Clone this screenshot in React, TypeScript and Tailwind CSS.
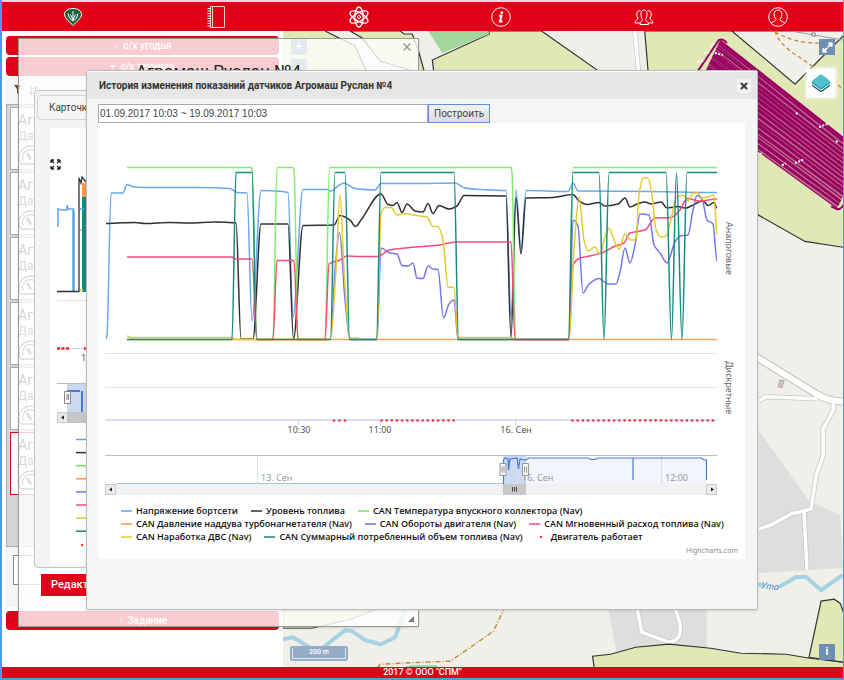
import { ReactNode } from "react";
import { ArrowDownUp, Maximize2, X } from "lucide-react";

type Point = [number, number];

// Monotone cubic interpolation, keeps plateaus flat and peaks where they are
function spline(points: Point[]) {
  const slopes = points.slice(1).map((p, i) => (p[1] - points[i][1]) / (p[0] - points[i][0]));
  const tangents = points.map((_, i) => {
    const a = slopes[i - 1];
    const b = slopes[i];
    if (a === undefined || b === undefined || a * b <= 0) return 0;
    return (2 * a * b) / (a + b);
  });
  let d = `M${points[0][0]} ${points[0][1]}`;
  for (let i = 1; i < points.length; i++) {
    const [x0, y0] = points[i - 1];
    const [x1, y1] = points[i];
    const h = (x1 - x0) / 3;
    d += `C${x0 + h} ${y0 + h * tangents[i - 1]} ${x1 - h} ${y1 - h * tangents[i]} ${x1} ${y1}`;
  }
  return d;
}

const SERIES: { color: string; points: Point[] }[] = [
  {
    color: "#6aa9ee",
    points: [[106, 339], [107, 335], [111, 193], [123, 193], [127, 184.5], [134, 187], [150, 187.5], [200, 187.5], [230, 188.5], [237, 192.5], [247, 193], [252, 321], [261, 190.5], [275, 191], [288, 192.5], [293, 317], [303, 189.5], [327, 189.5], [331, 191], [338, 186], [344, 183], [355, 188.5], [375, 190], [381, 183.5], [420, 183.5], [455, 183], [465, 188], [480, 189.5], [506, 190.5], [511, 318], [516, 190], [521, 250], [526, 190.5], [568, 191.5], [573, 183], [578, 191], [650, 191.5], [717, 192.5]],
  },
  {
    color: "#303036",
    points: [[106, 223.5], [118, 223], [135, 222.5], [145, 223.5], [170, 222.5], [190, 223], [215, 222], [236, 223], [241, 339], [253, 339], [261, 224], [288, 224], [293.5, 339], [303, 225.5], [334, 225], [340, 215.5], [350, 220], [355.5, 226.5], [361, 220], [381, 194], [388, 204.5], [393, 205.5], [397, 202.5], [402, 212.5], [407, 204], [415, 211], [423, 212], [428, 203.5], [433, 213.5], [439, 205.5], [449, 209], [457, 206], [464, 195.5], [506, 196], [511, 338], [516, 197.5], [521, 254], [526, 198], [553, 197.5], [573, 194.5], [579, 201], [587, 204.5], [599, 202.5], [605, 206], [618, 204], [625, 198], [630, 207], [637, 204], [645, 202], [651, 204], [661, 202], [667, 208], [678, 206.5], [685, 208], [703, 201], [708, 205.5], [714, 202.5], [717, 208]],
  },
  {
    color: "#82ee6c",
    points: [[127, 167.5], [251, 167.5], [252, 169], [257, 339.5], [273, 339.5], [277, 167.5], [293, 167.5], [294, 170], [298, 339.5], [325, 339.5], [329.5, 167.5], [511, 167.5], [512, 172], [515.5, 339.5], [568.5, 339.5], [573, 167.5], [717, 167.5]],
  },
  { color: "#f7a35c", points: [[127, 339.5], [717, 339.5]] },
  {
    color: "#7578ee",
    points: [[330.5, 339.5], [335, 270], [339.5, 232.5], [345, 300], [350, 339.5], [377, 339.5], [381, 248], [390, 253], [397, 254], [402, 265.5], [408, 266], [413, 263], [417, 278], [423, 278.5], [428, 266], [433, 269], [438, 269.5], [443.5, 318], [449, 304], [454, 300], [458, 339.5], [569, 339.5], [573, 220], [578, 226], [583, 293], [589, 284], [599, 278.5], [608, 284], [616, 284], [620, 272], [625, 248], [630, 263], [635, 245], [640, 214], [649, 215], [654, 245], [660, 253], [667, 263], [675, 242], [680, 236], [688, 235], [693, 210], [697, 195.5], [702, 199], [707, 220], [713, 224], [717, 261]],
  },
  {
    color: "#f04f78",
    points: [[127, 257], [232, 257], [235, 259], [252, 259], [257, 339.5], [273, 339.5], [277, 260.5], [294, 260.5], [298, 339.5], [325, 339.5], [329, 264], [340, 260], [347, 256], [360, 256.5], [378, 256.5], [389, 250], [410, 247.5], [440, 245], [455, 242], [511, 242], [515, 339.5], [569, 339.5], [573, 265], [580, 258], [590, 256], [604, 252], [613, 247], [624, 243], [630, 233], [645, 230], [655, 218], [671, 217.5], [680, 210], [687, 198.5], [700, 201], [717, 199]],
  },
  {
    color: "#e4cb30",
    points: [[127, 336], [131, 337.5], [232, 337.5], [236, 339.5], [330.5, 339.5], [336, 270], [340, 194.5], [344, 270], [350, 338], [357, 338], [361, 339.5], [377, 339.5], [381, 213], [385, 207.5], [391, 207.5], [397, 215], [405, 213.5], [413, 215], [427, 217], [433, 226.5], [438, 226.5], [443, 240], [448, 287], [454, 287.5], [458, 337.5], [510, 337.5], [517, 339.5], [569, 339.5], [574, 250], [579, 197], [584, 240], [588, 251], [595, 247], [600, 254], [605, 237], [609, 228], [614, 240], [619, 249], [625, 234], [631, 240], [636, 240], [639, 195], [643, 178], [648, 178], [652, 195], [656, 230], [661, 237], [666, 236], [672, 215], [676, 198], [683, 195], [688, 201], [693, 193], [698, 193], [702, 198], [708, 197], [714, 195], [717, 235]],
  },
  {
    color: "#188a82",
    points: [[127, 339.5], [232, 339.5], [236, 172.5], [252, 172.5], [256.5, 339.5], [330.5, 339.5], [335, 172.5], [345, 172.5], [349.5, 339.5], [376.5, 339.5], [381, 172.5], [454, 172.5], [458.5, 339.5], [568.5, 339.5], [573, 172.5], [599, 172.5], [604, 339.5], [609, 172.5], [666, 172.5], [671.5, 339.5], [676.5, 173], [682, 339.5], [687, 172.5], [717, 172.5]],
  },
];

const LEGEND = [
  { label: "Напряжение бортсети", color: "#5b9fe8" },
  { label: "Уровень топлива", color: "#303036" },
  { label: "CAN Температура впускного коллектора (Nav)", color: "#78e660" },
  { label: "CAN Давление наддува турбонагнетателя (Nav)", color: "#fb9440" },
  { label: "CAN Обороты двигателя (Nav)", color: "#6e72ee" },
  { label: "CAN Мгновенный расход топлива (Nav)", color: "#f04f78" },
  { label: "CAN Наработка ДВС (Nav)", color: "#e4cb30" },
  { label: "CAN Суммарный потребленный объем топлива (Nav)", color: "#188080" },
  { label: "Двигатель работает", color: "#f33", dot: true },
];

const ENGINE_DOTS = [
  334, 339.5, 345,
  ...Array.from({ length: 15 }, (_, i) => 381.5 + i * 5.15),
  ...Array.from({ length: 28 }, (_, i) => 572.5 + i * 5.2),
];

function NavLink({ label, children }: { label: string; children: ReactNode }) {
  return (
    <a href="#" aria-label={label} className="flex items-center justify-center">
      <svg width="24" height="24" viewBox="0 0 24 24" fill="none" stroke="#fff" strokeWidth="1">
        {children}
      </svg>
    </a>
  );
}

function Header() {
  return (
    <header className="border-t-2 border-[#dcdcdc] bg-[#e20018]">
      <nav className="grid h-[29px] grid-cols-[17fr_17fr_17fr_17fr_17fr_15fr] pr-0.5">
        <NavLink label="Карта">
          <path d="M12 20.500C10 18 3.500 13.500 3.500 9.500C3.500 5.500 7.500 3.500 12 3.500S20.500 5.500 20.500 9.500C20.500 13.500 14 18 12 20.500Z" fill="#17623a" />
          <path d="M12 6V15M9.500 9.500L12 15L14.500 9.500M7 8.500Q7.500 14 12 16Q16.500 14 17 8.500" />
        </NavLink>
        <NavLink label="Журнал">
          <path d="M6.500 1.500H20.500V22.500H6.500ZM8.500 1.500V22.500" strokeWidth="0.800" />
          <path d="M3.500 3.500H6M3.500 6H6M3.500 8.500H6M3.500 11H6M3.500 13.500H6M3.500 16H6M3.500 18.500H6M3.500 21H6" />
        </NavLink>
        <NavLink label="Анализ">
          <ellipse cx="12" cy="12" rx="4.200" ry="10" strokeWidth="1.300" />
          <ellipse cx="12" cy="12" rx="4.200" ry="10" strokeWidth="1.300" transform="rotate(60 12 12)" />
          <ellipse cx="12" cy="12" rx="4.200" ry="10" strokeWidth="1.300" transform="rotate(120 12 12)" />
          <circle cx="12" cy="12" r="1.500" />
        </NavLink>
        <NavLink label="Информация">
          <circle cx="12" cy="12" r="9.300" />
          <circle cx="12.800" cy="7.700" r="1.400" fill="#fff" stroke="none" />
          <path d="M10 10.700H12.500L11 16.500H13.500" strokeWidth="2" />
        </NavLink>
        <NavLink label="Пользователи">
          <path d="M8 19.500C8 16 10.500 16.500 10.500 14.500C8.500 12 8 5 12 5S15.500 12 13.500 14.500C13.500 16.500 16.500 16 16.500 19.500Z" />
          <path d="M8.500 6C4.500 4.500 3.800 10 6 13C6 15 3 15 3 18H8M15.500 6C19.500 4.500 20.200 10 18 13C18 15 21 15 21 18H16.500" />
        </NavLink>
        <NavLink label="Профиль">
          <circle cx="12" cy="12" r="9.300" />
          <path d="M5.500 18.500C6 16 10.200 16.500 10.200 14.500C7 11 7.500 5 12 5S17 11 13.800 14.500C13.800 16.500 18 16 18.500 18.500" />
        </NavLink>
      </nav>
    </header>
  );
}

function SideButton({ children }: { children: ReactNode }) {
  return (
    <button className="flex h-[19px] w-full items-center justify-center gap-1 rounded-sm bg-[#e20018] text-[10px] font-medium text-white">
      {children}
    </button>
  );
}

function Caret({ open }: { open?: boolean }) {
  return (
    <svg width="6" height="6" viewBox="0 0 6 6">
      <path d={open ? "M0 1H6L3 5Z" : "M2 1L4 3L2 5Z"} fill={open ? "#fff" : "#6cc"} />
    </svg>
  );
}

function MachineCard({ selected }: { selected?: boolean }) {
  return (
    <li className={`h-[63px] border bg-white pl-[7px] text-[#222] ${selected ? "border-[#e20018]" : "border-[#aaa]"}`}>
      <p className="pt-1 text-sm leading-4">Агромаш</p>
      <p className="text-xs leading-4 text-[#444]">Дата</p>
      <svg width="25" height="21" viewBox="0 0 25 21" fill="none" stroke="#555" strokeWidth="1.300">
        <path d="M3 20A11.500 11.500 0 1 1 22 20ZM5 16.500A8 8 0 1 1 20 16.500" />
        <path d="M9 9L13 15.500" strokeWidth="2.500" />
      </svg>
    </li>
  );
}

function Sidebar() {
  return (
    <aside className="flex w-[33.4%] flex-col bg-white px-1 pt-[5px]">
      <div className="flex flex-col gap-0.5">
        <SideButton>
          <Caret />
          с/х угодья
        </SideButton>
        <SideButton>
          <Caret open />
          с/х техника
        </SideButton>
      </div>
      <div className="flex h-7 items-center gap-1.5 bg-[#f5f5f5] pl-2 text-[#333]">
        <svg width="8" height="10" viewBox="0 0 8 10">
          <path d="M0 0H8L5 4V10L3 8V4Z" fill="#6b4a20" />
        </svg>
        <ArrowDownUp size={11} />
      </div>
      <ul className="flex h-[443px] flex-col gap-0.5 border border-[#aaa] bg-[#d6d6d6] py-0.5 pl-[3px]">
        <MachineCard />
        <MachineCard />
        <MachineCard />
        <MachineCard />
        <MachineCard />
        <MachineCard selected />
      </ul>
      <div className="mb-1 bg-[#f5f5f5] px-[7px] pt-2 pb-[22px]">
        <input aria-label="Поиск" className="block h-[30px] w-full border border-[#888] bg-white px-2" />
      </div>
      <SideButton>
        <Caret />
        Задание
      </SideButton>
    </aside>
  );
}

const TRACK_WIDTHS = [2.8, 2.4, 1.6, 2.6, 1.2, 2.4, 3, 1.6, 2.4, 2.8, 1.4];

function TrackLines() {
  return (
    <g stroke="#990062" fill="none">
      <path d="M719 41L862 154L836 208L690 102Z" fill="#990062" fillOpacity="0.500" stroke="none" />
      {Array.from({ length: 27 }, (_, i) => {
        const t = i / 26;
        const s = Math.min(1, Math.max(0, t + ((i * 7) % 5) * 0.014 - 0.028));
        return (
          <path
            key={i}
            d={`M${719 - 29 * t} ${41 + 61 * t}L${862 - 26 * s} ${154 + 54 * s}`}
            strokeWidth={TRACK_WIDTHS[i % TRACK_WIDTHS.length]}
          />
        );
      })}
      <path d="M697 71L718 40Q722 38 726 43M830 206L836 209Q841 209 843 203" strokeWidth="2" />
      <path
        d="M709 47L713 44M703 53L709 52M714 53L722 55M697 62L704 60M795 114L797 112M818 127L828 123M835 142L837 140M759 154L762 152M781 165L785 163M794 163L803 159"
        stroke="#fff"
        strokeWidth="2"
        strokeDasharray="2 1.500"
      />
    </g>
  );
}

function MapView() {
  return (
    <div className="relative flex-1 overflow-hidden bg-[#f1efea]">
      <svg className="absolute inset-0 h-full w-full" viewBox="283 31 559 636" preserveAspectRatio="xMinYMin slice" fill="none">
        <g fill="#e0e9b6" stroke="#333" strokeWidth="1.200">
          <path d="M283 31H325L355 46L370 80H283Z" stroke="none" />
          <path d="M350 31L362 38L380 61L425 75L418 50L412 34H404L400 31Z" />
          <path d="M325 31L355 46L370 80" fill="none" />
          <path d="M488 31L489 34L432 60L436 90H625L541 31Z" />
          <path d="M428 31H488L489 34L442 53Z" fill="#a3d69d" stroke="none" />
          <path d="M644 31L654 150L758 215L804 241L843 247V31Z" />
          <path d="M731 31L794 84L843 35V31Z" fill="#f1efea" />
        </g>
        <path d="M634 31L638 72" stroke="#ccc" strokeWidth="5" />
        <path d="M634 31L638 72" stroke="#fff" strokeWidth="3.500" />
        <TrackLines />
        <path d="M774 31Q778 43 792 53Q812 66 842 89M774 32Q795 44 819 43" stroke="#b98b35" strokeWidth="1.300" strokeDasharray="4 3" />
        <path d="M790 31L842 40" stroke="#999" />
        <rect x="811" y="33" width="3" height="3" fill="#fff" stroke="#777" />

        <path d="M758 430L808 500L839 514L842 567L758 572Z" fill="#e0dddf" />
        <path d="M607 605H706V652L616 651Z" fill="#e0dddf" />
        <path d="M779 379L783 380L781 387L777 386Z" fill="#cfc5be" stroke="#b5aaa4" />
        <g strokeLinejoin="round">
          <path d="M758 400L765 396L816 398M832 402V410L822 428V455L815 475L810 508L790 513L770 524L758 528M803 511L806 569M636 605L641 631L668 641Q682 640 679 622L674 605" stroke="#c9c6c3" strokeWidth="5" />
          <path d="M750 353L815 393Q825 400 843 401" stroke="#c4c1be" strokeWidth="8" />
          <path d="M758 400L765 396L816 398M832 402V410L822 428V455L815 475L810 508L790 513L770 524L758 528M803 511L806 569M636 605L641 631L668 641Q682 640 679 622L674 605" stroke="#fff" strokeWidth="3.500" />
          <path d="M750 353L815 393Q825 400 843 401" stroke="#fff" strokeWidth="6" />
        </g>
        <g stroke="#a5d3e1" strokeWidth="4" strokeLinejoin="round">
          <path d="M283 638L293 636L317 651L345 629L352 630L365 639L381 643L395 636L405 608" />
          <path d="M755 583L762 584M778 586L795 576H805L820 589L840 575H843" />
        </g>
        <text x="760" y="587" fill="#3e86c4" fontSize="9" fontStyle="italic" fontFamily="Noto Sans, sans-serif" transform="rotate(8 760 587)">
          Ута
        </text>
        <path d="M283 605H385L350 618L312 627H283Z" fill="#e0e9b6" stroke="#555" />
        <path d="M505 605L493 630L450 660L422 661L380 663L372 672" stroke="#b98b35" strokeWidth="1.400" strokeDasharray="5 2 1 2" />
        <path d="M398 667L412 664H437V667Z" fill="#93cfa0" />
        <g fill="#e0e9b6" stroke="#333" strokeWidth="1.200">
          <path d="M594 670L592 655L610 653L635 646L668 643L710 647L740 652L785 653L809 657L843 661V670Z" />
          <path d="M808 656L820 600L833 598L839 602L843 613V661Z" />
        </g>
      </svg>

      <div className="absolute top-2 left-2 flex flex-col gap-1">
        <button className="h-4 w-4 bg-[#7b98bc] text-xs leading-4 font-bold text-white">+</button>
        <button className="h-4 w-4 bg-[#7b98bc] text-xs leading-4 font-bold text-white">−</button>
      </div>
      <button aria-label="На весь экран" className="absolute top-2 right-2 flex h-4 w-4 items-center justify-center bg-[#6f8fb2] text-white">
        <Maximize2 size={11} strokeWidth={4} />
      </button>
      <button aria-label="Слои" className="absolute top-[38px] right-2 flex h-7 w-7 items-center justify-center bg-white shadow-[0_0_2px_2px_rgba(255,255,255,0.6)]">
        <svg width="20" height="20" viewBox="0 0 20 20">
          <path d="M1 10V12Q1 13 2 13.700L9 18.700Q10 19.300 11 18.700L18 13.700Q19 13 19 12V10Z" fill="#1f4f5c" />
          <path d="M1 9V10.500Q1 11.500 2 12.200L9 17.200Q10 17.800 11 17.200L18 12.200Q19 11.500 19 10.500V9Z" fill="#fff" />
          <path d="M1 8V9.500Q1 10.500 2 11.200L9 16.200Q10 16.800 11 16.200L18 11.200Q19 10.500 19 9.500V8Z" fill="#2a9fab" />
          <path d="M2 7L9 1.700Q10 1 11 1.700L18 7Q19.500 8.200 18 9.400L11 14.500Q10 15.200 9 14.500L2 9.400Q0.500 8.200 2 7Z" fill="#51c1cf" />
        </svg>
      </button>
      <button className="absolute right-2 bottom-[7px] h-4 w-4 bg-[#6f8fb2] text-[11px] leading-4 font-bold text-white">i</button>
      <div className="absolute bottom-1.5 left-[7px] h-[15px] w-[58px] rounded-xs bg-[#96abc6] p-0.5">
        <div className="h-[11px] border border-t-0 border-white/70 text-center text-[7px] leading-[9px] font-medium text-white">200 m</div>
      </div>
    </div>
  );
}

function CardWindow() {
  return (
    <section className="absolute top-[38px] left-4 w-[401px] border border-[#999] bg-white/80 shadow-sm">
      <button aria-label="Закрыть карточку" className="absolute top-0.5 right-[5px] text-[#999]">
        <X size={12} strokeWidth={3} />
      </button>
      <h2 className="h-[51px] pt-5 text-center text-[17px] leading-6 text-[#222]">Агромаш Руслан №4</h2>
      <div className="mx-[15px] h-[478px] rounded-sm border border-[#c4c4c4] bg-[#f4f4f4] pt-1 pl-0.5">
        <button className="block h-[25px] rounded-sm border border-[#d4d4d4] bg-[#f5f5f5] px-[11px] text-[10px] text-[#444]">Карточка</button>
        <div className="mt-2 ml-[13px] h-[437px] bg-white">
          <MiniChart />
        </div>
      </div>
      <div className="flex items-start pt-1.5 pb-[30px] pl-[22px]">
        <button className="h-[22px] bg-[#e20018] px-2.5 text-[11px] font-medium text-white">Редактировать</button>
      </div>
      <svg className="absolute right-1 bottom-1" width="6" height="6" viewBox="0 0 6 6">
        <path d="M6 0V6H0Z" fill="#777" />
      </svg>
    </section>
  );
}

function MiniChart() {
  return (
    <svg className="block" width="60" height="437" viewBox="50 128 60 437" fill="none">
      <path d="M51 160V163M51 160H54M51 160L54 163M60 160V163M60 160H57M60 160L57 163M51 169V166M51 169H54M51 169L54 166M60 169V166M60 169H57M60 169L57 166" stroke="#222" strokeWidth="1.300" />
      <path d="M82 183H110V292H82Z" fill="#178a82" />
      <path d="M82 183H110V197H82Z" fill="#fd9a4a" />
      <path d="M58 227V209L62 210H67V205L68 209H72M73 208V291M74 210V291M80 209H84" stroke="#5da2ee" strokeWidth="1.500" />
      <path d="M57 291.500H79V178L81 183L82 177L86 182" stroke="#333" strokeWidth="1.300" />
      <path d="M79 230H82" stroke="#f15c80" />
      <path d="M80 290H83" stroke="#e4d354" strokeWidth="2" />
      <path d="M57 300.500H110" stroke="#e2e2e2" />
      <path d="M57 348.500H110" stroke="#ccd6eb" />
      <path d="M57 348.500H69M84 348.500H110" stroke="#f22" strokeWidth="2.500" strokeDasharray="3 1.500" />
      <text x="81" y="361" fill="#555" fontSize="9" fontFamily="Noto Sans, sans-serif">10</text>
      <path d="M57 383.500H110" stroke="#bbb" />
      <path d="M67 384H110V412H67Z" fill="#ccd8ef" />
      <path d="M67 391H80M82 391V412" stroke="#4a78cc" strokeWidth="2" />
      <path d="M64.500 391.500H70.500V403.500H64.500Z" fill="#f7f7f7" stroke="#888" />
      <path d="M67 394V400M68.500 394V400" stroke="#888" />
      <path d="M57.500 412.500H67.500V422.500H57.500Z" fill="#ebe7e8" stroke="#ccc" />
      <path d="M67 412H110V423H67Z" fill="#c5c5c5" />
      <path d="M64 415.500V419.500L61 417.500Z" fill="#222" />
      {LEGEND.map(({ label, color, dot }, i) =>
        dot ? (
          <circle key={label} cx="82" cy="545" r="1.200" fill={color} />
        ) : (
          <path key={label} d={`M76 ${439.5 + i * 13.1}H88`} stroke={color} strokeWidth="1.500" />
        ),
      )}
    </svg>
  );
}

function SensorChart() {
  return (
    <svg className="block w-full" viewBox="98 123 647 374" fill="none" fontFamily="Lucida Grande, Noto Sans, sans-serif" fontSize="9">
      {SERIES.map(({ color, points }) => (
        <path key={color} d={spline(points)} stroke={color} strokeWidth="1.500" strokeLinejoin="round" />
      ))}
      <path d="M105 353.500H717M105 387.500H717" stroke="#e3e3e3" />
      <path d="M105 420H717" stroke="#ccd6eb" strokeWidth="1.500" />
      <path d="M298.500 420V425M380.500 420V425M515.500 420V425" stroke="#ccd6eb" />
      {ENGINE_DOTS.map((x) => (
        <circle key={x} cx={x} cy="420.500" r="1.200" fill="#f22f2f" />
      ))}
      <g fill="#555" textAnchor="middle">
        <text x="299" y="433">10:30</text>
        <text x="380" y="433">11:00</text>
        <text x="516" y="433">16. Сен</text>
      </g>
      <g fill="#666">
        <text transform="translate(726 222) rotate(90)">Аналоговые</text>
        <text transform="translate(726 361) rotate(90)">Дискретные</text>
      </g>

      {/* navigator */}
      <path d="M503 456H526V484H503Z" fill="#ccd9f0" />
      <path d="M526 458H707V484H526Z" fill="#f2f6fc" />
      <path d="M105 455.500H717" stroke="#c0c0c0" />
      <path d="M257.500 456V484M518.500 456V484M661.500 456V484" stroke="#d9dfe8" />
      <path d="M116 483.500H503" stroke="#a9c1e8" />
      <path
        d="M503.500 484V460L505 458L508 459L508.500 470L510 459L517 458L518.500 469L520 459L525 460L529 458H588L591 459.500H595L598 458H633V480V458H701L704 460H706.500V480"
        stroke="#4a7bd0"
        strokeWidth="1.200"
      />
      <g fill="#999">
        <text x="261" y="481">13. Сен</text>
        <text x="522" y="481">16. Сен</text>
        <text x="665" y="481">12:00</text>
      </g>
      {[503, 525.5].map((x) => (
        <g key={x} stroke="#999">
          <path d={`M${x - 3} 463.500H${x + 3}V475.500H${x - 3}Z`} fill="#f5f5f5" />
          <path d={`M${x - 1} 466.500V472.500M${x + 1} 466.500V472.500`} />
        </g>
      ))}
      <path d="M105 484H717V495H105Z" fill="#f1f1f1" />
      <path d="M105.500 484.500H115.500V494.500H105.500ZM706.500 484.500H716.500V494.500H706.500Z" fill="#ebebeb" stroke="#ccc" />
      <path d="M112 487.500V491.500L109 489.500ZM711 487.500V491.500L714 489.500Z" fill="#222" />
      <path d="M503 484H526V495H503Z" fill="#c8c8c8" />
      <path d="M512.500 487V491.500M514.500 487V491.500M516.500 487V491.500" stroke="#444" />
    </svg>
  );
}

function HistoryDialog() {
  return (
    <section
      role="dialog"
      aria-labelledby="history-title"
      className="absolute top-[70px] right-[85px] left-[84px] rounded-xs border border-[#bbb] bg-[#f5f5f5] shadow-sm"
    >
      <div className="flex h-7 items-center justify-between border-t border-white bg-[#e6e6e6] pr-1.5 pl-3">
        <h1 id="history-title" className="text-[10px] font-bold text-[#333]">
          История изменения показаний датчиков Агромаш Руслан №4
        </h1>
        <button aria-label="Закрыть" className="flex h-3.5 w-3.5 items-center justify-center rounded-xs bg-[#f4f4f4] text-[#444]">
          <X size={10} strokeWidth={5} />
        </button>
      </div>
      <div className="pt-[5px] pr-3 pb-[50px] pl-[11px]">
        <form className="flex">
          <input
            aria-label="Период"
            defaultValue="01.09.2017 10:03 ~ 19.09.2017 10:03"
            className="h-[19px] w-[330px] border border-[#a9a9a9] bg-white px-px font-['Liberation_Sans',sans-serif] text-[10px] text-[#444]"
          />
          <button
            type="button"
            className="h-[19px] border border-[#5e8ede] bg-linear-to-b from-[#f3f3f3] to-[#dcdcdc] px-[5px] text-[10px] leading-4 text-[#444]"
          >
            Построить
          </button>
        </form>
        <div className="bg-white">
          <SensorChart />
          <ul className="flex flex-wrap gap-x-[13px] pt-[7px] pl-[23px] font-['Open_Sans',sans-serif] text-[9px] leading-[13px] font-semibold text-[#111]">
            {LEGEND.map(({ label, color, dot }) => (
              <li key={label} className="flex items-center gap-1">
                <svg width="11" height="4" viewBox="0 0 11 4">
                  {dot ? <circle cx="5" cy="2" r="1.200" fill={color} /> : <path d="M0 2H11" stroke={color} strokeWidth="1.500" />}
                </svg>
                {label}
              </li>
            ))}
          </ul>
          <div className="flex justify-end pr-[7px] font-['Noto_Sans',sans-serif] text-[7px] leading-4 text-[#888]">
            <a href="#">Highcharts.com</a>
          </div>
        </div>
      </div>
    </section>
  );
}

export default function App() {
  return (
    <div className="relative flex min-h-screen flex-col overflow-hidden border-r border-b-2 border-l-2 border-[#4f9bdc] bg-white font-[Roboto,sans-serif]">
      <Header />
      <main className="flex flex-1">
        <Sidebar />
        <MapView />
      </main>
      <footer className="h-[11px] bg-[#e20018] text-center text-[9px] leading-[11px] font-medium text-white">2017 © ООО "СПМ"</footer>
      <CardWindow />
      <HistoryDialog />
    </div>
  );
}
